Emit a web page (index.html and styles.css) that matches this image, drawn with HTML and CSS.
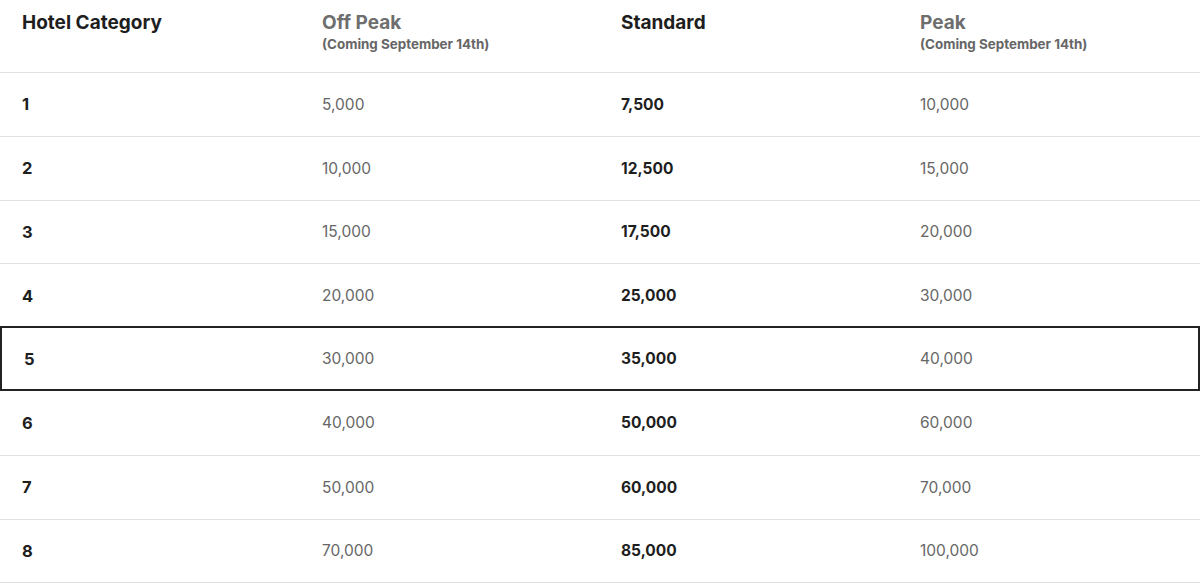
FILE: index.html
```html
<!DOCTYPE html>
<html>
<head>
<meta charset="utf-8">
<link rel="stylesheet" href="styles.css">
</head>
<body>
<div class="award-chart">
  <div class="row head-row">
    <div class="cell col-dark">Hotel Category</div>
    <div class="cell col-muted">Off Peak<span class="sub">(Coming September 14th)</span></div>
    <div class="cell col-dark">Standard</div>
    <div class="cell col-muted">Peak<span class="sub">(Coming September 14th)</span></div>
  </div>
  <div class="row"><div class="cell cat">1</div><div class="cell">5,000</div><div class="cell std">7,500</div><div class="cell">10,000</div></div>
  <div class="row"><div class="cell cat">2</div><div class="cell">10,000</div><div class="cell std">12,500</div><div class="cell">15,000</div></div>
  <div class="row"><div class="cell cat">3</div><div class="cell">15,000</div><div class="cell std">17,500</div><div class="cell">20,000</div></div>
  <div class="row"><div class="cell cat">4</div><div class="cell">20,000</div><div class="cell std">25,000</div><div class="cell">30,000</div></div>
  <div class="row highlight"><div class="cell cat">5</div><div class="cell">30,000</div><div class="cell std">35,000</div><div class="cell">40,000</div></div>
  <div class="row"><div class="cell cat">6</div><div class="cell">40,000</div><div class="cell std">50,000</div><div class="cell">60,000</div></div>
  <div class="row"><div class="cell cat">7</div><div class="cell">50,000</div><div class="cell std">60,000</div><div class="cell">70,000</div></div>
  <div class="row"><div class="cell cat">8</div><div class="cell">70,000</div><div class="cell std">85,000</div><div class="cell">100,000</div></div>
</div>
</body>
</html>
```
FILE: styles.css
```css
html, body {
  margin: 0;
  padding: 0;
  background: #fff;
}
body {
  font-family: Inter, "Liberation Sans", sans-serif;
  color: #666;
}
.award-chart {
  width: 1200px;
  display: flex;
  flex-direction: column;
}
.row {
  display: grid;
  grid-template-columns: 300px 299px 299px 302px;
  align-items: center;
  height: 63.75px;
  box-sizing: border-box;
  border-top: 1px solid #e2e2e2;
}
.row:last-child {
  border-bottom: 1px solid #e2e2e2;
  height: 64.75px;
}
.cell {
  padding-left: 22px;
  font-size: 15.5px;
  color: #666;
}
.head-row {
  height: 72px;
  border-top: none;
  align-items: start;
}
.head-row .cell {
  padding-top: 11px;
  font-size: 19px;
  font-weight: 700;
  line-height: 24px;
}
.head-row .col-dark { color: #1e1e1e; }
.head-row .col-muted { color: #6e6e6e; }
.sub {
  display: block;
  font-size: 13.4px;
  line-height: 18px;
  margin-top: 0;
  color: #666;
}
.cat {
  font-weight: 700;
  font-size: 16.5px;
  color: #1e1e1e;
}
.std {
  font-weight: 700;
  color: #1e1e1e;
}
.row.highlight {
  border: 2px solid #222;
  margin-top: -1px;
  height: 65px;
}
.row.highlight .cell {
  margin-left: -2px;
}
.row.highlight .cat {
  margin-left: 0;
}
.row.highlight + .row {
  border-top: none;
  height: 63.75px;
}
```
